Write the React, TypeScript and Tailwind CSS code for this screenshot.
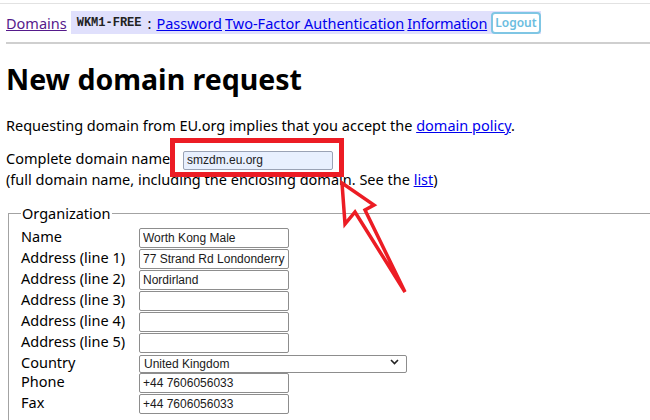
import React from "react";

const inputCls =
  "h-[20px] w-[150px] border border-[#8d8d8d] rounded-[2px] bg-white px-[3px] text-[12px] text-[#1a1a1a] font-['Liberation_Sans',Arial,sans-serif] outline-none";

function Row({ label, value }: { label: string; value: string }) {
  return (
    <div className="flex items-center h-[20px]">
      <div className="w-[118px] shrink-0 leading-[20px] -mt-[4px]">{label}</div>
      <input className={inputCls} defaultValue={value} readOnly />
    </div>
  );
}

export default function App() {
  return (
    <div className="relative w-[650px] h-[420px] overflow-hidden bg-white text-black text-[14.5px] font-['Noto_Sans',sans-serif]">
      <div className="h-[3px]" />
      <div className="h-px bg-[#e2e2e2]" />
      {/* nav */}
      <div className="mt-[7px] pl-[6px] flex items-center h-[23px] leading-[20px]">
        <a href="#" className="text-[#551a8b] underline">Domains</a>
        <div className="ml-[4px] h-full flex items-center bg-[#e0e0fc] pl-[6px]">
          <span className="font-['Liberation_Mono',monospace] font-bold text-[12px] text-[#222]">WKM1-FREE</span>
          <span className="ml-[6px] mr-[5px]">:</span>
          <a href="#" className="text-[#0000ee] underline">Password</a>
          <a href="#" className="ml-[3px] text-[#0000ee] underline">Two-Factor Authentication</a>
          <a href="#" className="ml-[3px] text-[#0000ee] underline tracking-[-0.2px]">Information</a>
          <button className="ml-[4px] h-[22px] px-[2px] border-2 border-[#7fc6e4] rounded-[4px] bg-white text-[#6bbde0] text-[12px] font-semibold leading-[16px]">
            Logout
          </button>
        </div>
      </div>
      <div className="mt-[8px] ml-[6px] border-t-2 border-[#cfcfcf]" />
      {/* heading */}
      <h1 className="mt-[15px] pl-[6px] text-[28.5px] font-bold leading-[40px]">New domain request</h1>
      <p className="mt-[16px] pl-[6px] leading-[21px]">
        Requesting domain from EU.org implies that you accept the{" "}
        <a href="#" className="text-[#0000ee] underline">domain policy</a>.
      </p>
      <div className="mt-[12px] pl-[6px] flex items-start h-[21px] leading-[21px]">
        <span className="w-[177px] shrink-0">Complete domain name</span>
        <input
          className="mt-[3px] h-[19px] w-[150px] border border-[#9aa3b5] rounded-[2px] bg-[#e8f0fe] px-[3px] text-[12px] text-[#222] font-['Liberation_Sans',Arial,sans-serif] outline-none"
          defaultValue="smzdm.eu.org"
          readOnly
        />
      </div>
      <div className="pl-[6px] leading-[21px]">
        (full domain name, including the enclosing domain. See the{" "}
        <a href="#" className="text-[#0000ee] underline">list</a>)
      </div>
      {/* fieldset */}
      <fieldset className="mt-[13px] ml-[8px] w-[700px] border border-[#a3a3a3] pl-[12px] pb-[10px]">
        <legend className="px-[1px] leading-[20px]">Organization</legend>
        <div className="pt-[5px] flex flex-col gap-px">
          <Row label="Name" value="Worth Kong Male" />
          <Row label="Address (line 1)" value="77 Strand Rd Londonderry" />
          <Row label="Address (line 2)" value="Nordirland" />
          <Row label="Address (line 3)" value="" />
          <Row label="Address (line 4)" value="" />
          <Row label="Address (line 5)" value="" />
          <div className="flex items-center h-[18px]">
            <div className="w-[118px] shrink-0 leading-[18px] -mt-[2px]">Country</div>
            <div className="relative">
              <select className="appearance-none h-[18px] w-[268px] border border-[#8d8d8d] rounded-[2px] bg-white pl-[4px] text-[12px] leading-[16px] text-[#1a1a1a] font-['Liberation_Sans',Arial,sans-serif] outline-none">
                <option>United Kingdom</option>
              </select>
              <svg className="absolute right-[8px] top-[7px]" width="9" height="6" viewBox="0 0 9 6">
                <path d="M1 1 L4.5 4.5 L8 1" fill="none" stroke="#222" strokeWidth="1.6" />
              </svg>
            </div>
          </div>
          <Row label="Phone" value="+44 7606056033" />
          <Row label="Fax" value="+44 7606056033" />
        </div>
      </fieldset>
      {/* annotation overlays */}
      <div className="absolute left-[170px] top-[138px] w-[174px] h-[39px] border-[5px] border-[#ec1c24]" />
      <svg className="absolute left-0 top-0 pointer-events-none" width="650" height="420">
        <polygon
          points="342,183 345,224 355,212 405,292 365,210 374,205"
          fill="none"
          stroke="#ec1c24"
          strokeWidth="3.5"
          strokeLinejoin="miter"
        />
      </svg>
    </div>
  );
}
